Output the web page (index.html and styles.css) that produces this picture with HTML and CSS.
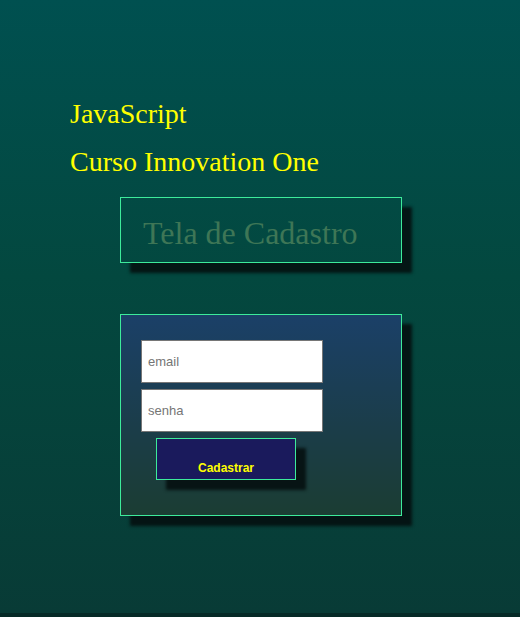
FILE: index.html
```html
<!DOCTYPE html>
<html lang="pt-BR">
<head>
<meta charset="utf-8">
<title>Cadastro</title>
<link rel="stylesheet" href="styles.css">
</head>
<body>
<main class="page">
  <h1 class="title">JavaScript</h1>
  <h2 class="title">Curso Innovation One</h2>
  <div class="header-box">Tela de Cadastro</div>
  <form class="form-box">
    <input class="field" type="text" placeholder="email">
    <input class="field" type="password" placeholder="senha">
    <button class="btn" type="button">Cadastrar</button>
  </form>
</main>
</body>
</html>
```
FILE: styles.css
```css
html {
  background: #062a27;
  height: 100%;
}
body {
  margin: 0;
  height: 613px;
  background: linear-gradient(to bottom, #005050 0%, #03483f 45%, #083b36 100%);
}
.page {
  padding-top: 98px;
  display: flex;
  flex-direction: column;
  align-items: flex-start;
}
.title {
  margin: 0 0 16px 70px;
  font-family: "Liberation Serif", serif;
  font-weight: normal;
  font-size: 28px;
  line-height: 32px;
  color: #ffff00;
}
.header-box {
  margin: 3px 0 0 120px;
  width: 258px;
  height: 61px;
  padding: 3px 0 0 22px;
  border: 1px solid #3deb9b;
  box-sizing: content-box;
  font-family: "Liberation Serif", serif;
  font-size: 32px;
  line-height: 64px;
  color: #3e7656;
  box-shadow: 10px 10px 3px rgba(5, 15, 15, 0.88);
}
.form-box {
  margin: 51px 0 0 120px;
  width: 282px;
  height: 202px;
  border: 1px solid #3deb9b;
  background: linear-gradient(to bottom, #1b4068 0%, #1b3d4a 55%, #1b3d33 100%);
  box-shadow: 10px 10px 3px rgba(5, 15, 15, 0.88);
  padding: 25px 0 0 20px;
  box-sizing: border-box;
  display: flex;
  flex-direction: column;
  align-items: flex-start;
  gap: 6px;
}
.form-box .field {
  width: 182px;
  height: 43px;
  box-sizing: border-box;
  margin: 0;
  border: 1px solid #767676;
  background: #ffffff;
  padding: 0 6px;
  font-family: "Liberation Sans", Arial, sans-serif;
  font-size: 13px;
  color: #333;
  outline: none;
}
.form-box .field::placeholder {
  color: #757575;
}
.btn {
  margin-left: 15px;
  width: 140px;
  height: 42px;
  box-sizing: border-box;
  border: 1px solid #3deb9b;
  background: #1a1a5c;
  color: #ffff00;
  font-family: "Liberation Sans", Arial, sans-serif;
  font-weight: bold;
  font-size: 12px;
  padding: 18px 0 0;
  box-shadow: 10px 10px 3px rgba(5, 15, 15, 0.88);
}
```
